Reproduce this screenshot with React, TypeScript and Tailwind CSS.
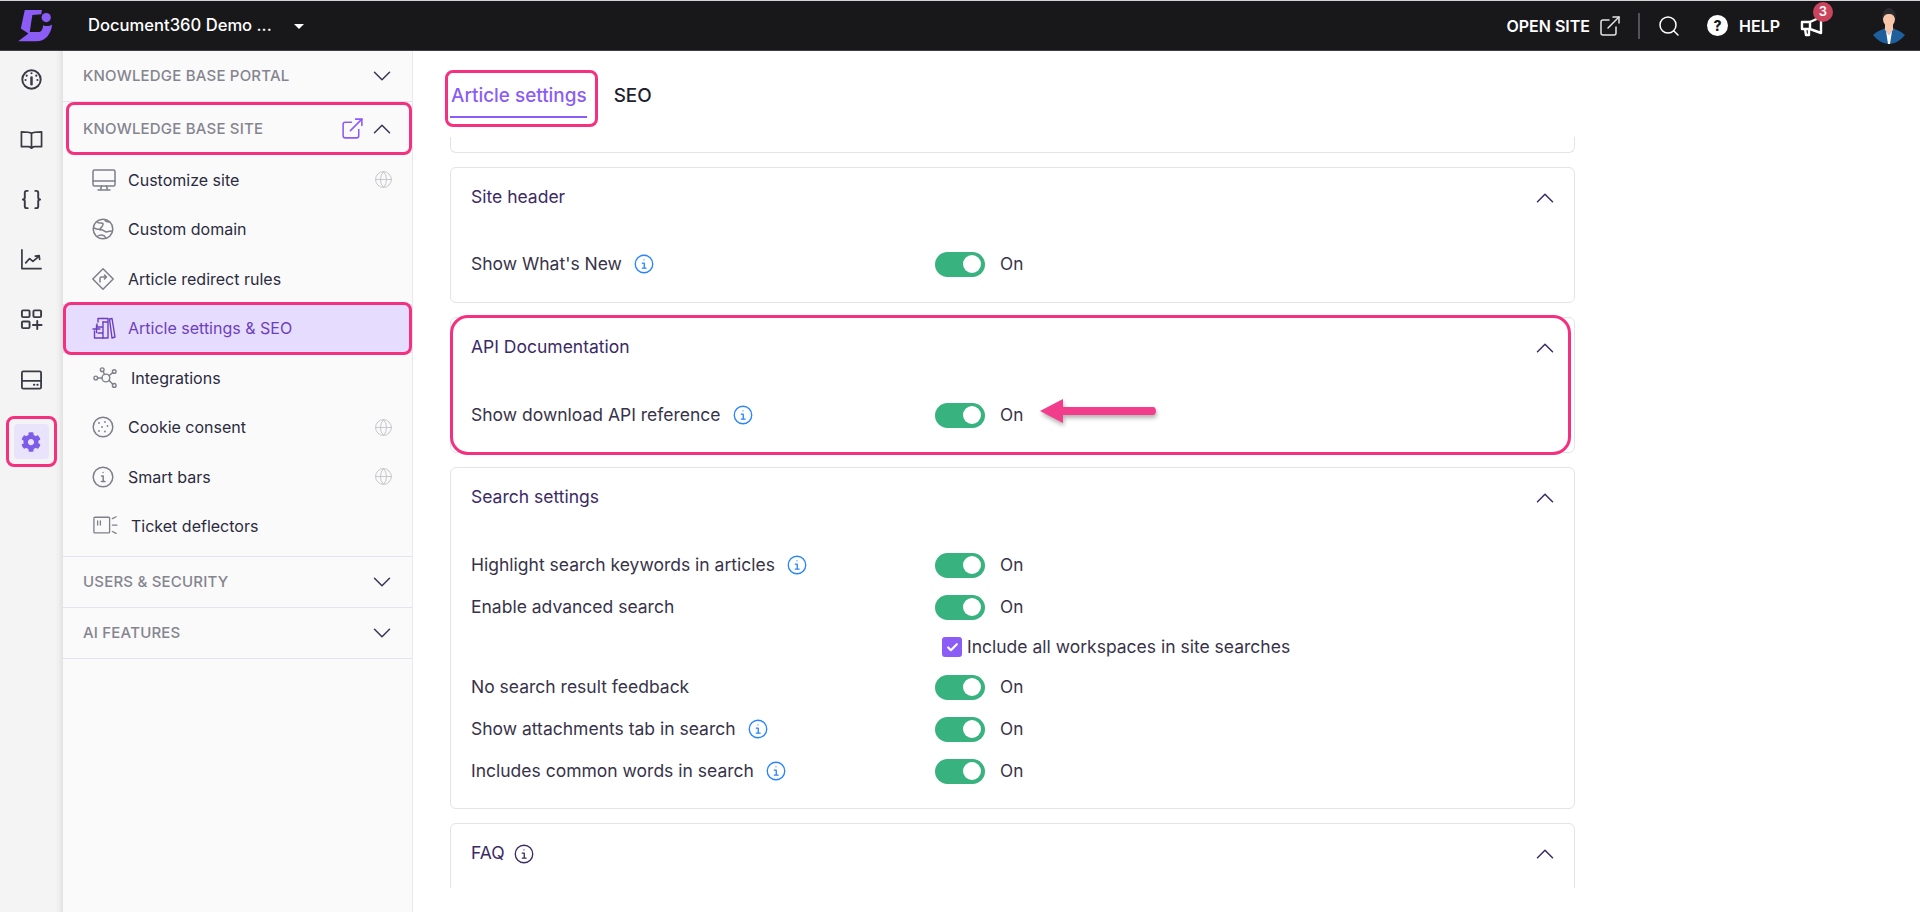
import type { ReactNode } from "react"
import { ChevronDown, ChevronUp, ExternalLink, Search, Braces, Globe, Check } from "lucide-react"
import { FaCog } from "react-icons/fa"

function Icon({ className, children, box = 24 }: { className?: string; children: ReactNode; box?: number }) {
  return (
    <svg viewBox={`0 0 ${box} ${box}`} fill="none" stroke="currentColor" strokeLinecap="round" strokeLinejoin="round" className={className}>
      {children}
    </svg>
  )
}

function Logo() {
  return (
    <svg viewBox="25 27 105 100" className="w-[35px] h-[33px]">
      <path fill="#8b5cf6" d="M45 30 L97 30 L95 43 L68 45 L60 97 L86 97 C94 97 99 90 101 76 C108 80 120 80 128 74 C125 100 110 125 80 125 L25 125 L56 101 L33 86 Z" />
      <circle cx="110" cy="53" r="14" fill="#8b5cf6" />
    </svg>
  )
}

function Avatar() {
  return (
    <svg viewBox="0 0 34 36" className="w-[34px] h-[36px]">
      <path fill="#1e5f9c" d="M1 27 C5 23 10 22 13 20 L21 20 C24 22 29 23 33 27 C29 32 23 36 17 36 C11 36 5 32 1 27 Z" />
      <path fill="#f7c6a8" d="M13 15 L21 15 L21 22 L17 27 L13 22 Z" />
      <path fill="#fff" d="M14 23 L17 27 L20 23 L18 36 L16 36 Z" />
      <ellipse cx="17" cy="11" rx="6" ry="7.5" fill="#f7c6a8" />
      <path fill="#2a2a2e" d="M10.5 12 C9.5 3 14 0 17 0 C21 0 24.5 4 23.5 12 C22.5 7 20 6 17 6 C14 6 11.5 7 10.5 12 Z" />
    </svg>
  )
}

function TopBar() {
  return (
    <header className="h-[51px] shrink-0 bg-[#18181b] border-t border-t-[#d4d4d8] border-b border-b-[#3f3f46] flex items-center text-white">
      <div className="ml-[18px] flex"><Logo /></div>
      <span className="ml-[35px] text-[16.6px] font-medium">Document360 Demo ...</span>
      <span className="ml-[22px] mt-[1px] w-0 h-0 border-x-[5px] border-x-transparent border-t-[5px] border-t-white" />
      <div className="ml-auto flex items-center h-full">
        <span className="text-[16px] font-semibold">OPEN SITE</span>
        <ExternalLink className="ml-[8px] w-[24px] h-[24px] text-[#e4e4e7]" strokeWidth={1.5} />
        <span className="ml-[16px] w-[2px] h-[26px] bg-[#52525b]" />
        <Search className="ml-[17px] w-[24px] h-[24px]" strokeWidth={1.5} />
        <span className="ml-[26px] w-[21px] h-[21px] rounded-full bg-white text-[#18181b] text-[14px] font-extrabold flex items-center justify-center">?</span>
        <span className="ml-[11px] text-[16px] font-semibold">HELP</span>
        <div className="relative ml-[19px] w-[24px] h-[24px]">
          <Icon className="w-[24px] h-[24px]">
            <path strokeWidth="2.4" d="M22 3 L22 19 L11 15 L3 15 L3 8 L11 8 Z M11 8 L11 15 M6 15 L7 21 L10 21 L10 15" />
          </Icon>
          <span className="absolute -top-[12px] left-[14px] w-[20px] h-[20px] rounded-full bg-[#c9445c] text-[13px] font-semibold flex items-center justify-center">3</span>
        </div>
        <div className="ml-[49px] mr-[14px] flex"><Avatar /></div>
      </div>
    </header>
  )
}

const railClass = "w-[23px] h-[23px] text-[#3a3a44]"

function Rail() {
  return (
    <aside className="w-[63px] shrink-0 bg-[#f4f4f5] shadow-[inset_-7px_0_6px_-5px_rgba(0,0,0,0.1)] flex flex-col items-center pr-[1px] pt-[17px]">
      <div className="flex flex-col items-center gap-[37px]">
        <Icon className={railClass}>
          <g strokeWidth="2">
            <circle cx="12" cy="12" r="9.6" />
            <path d="M12 10 L12 17" strokeWidth="2.6" />
            <path d="M12 5.5v.01M7 8v.01M17 8v.01M5.8 12.5v.01M18.2 12.5v.01" strokeWidth="2.2" />
          </g>
        </Icon>
        <Icon className={railClass}>
          <path strokeWidth="1.8" d="M12 5.5 C10 4 7 4 1.5 4 L1.5 19.5 L9 19.5 C10.5 19.5 11 20.5 12 21 C13 20.5 13.5 19.5 15 19.5 L22.5 19.5 L22.5 4 C17 4 14 4 12 5.5 Z M12 5.5 L12 20" />
        </Icon>
        <Braces className={railClass} strokeWidth={2} />
        <Icon className={railClass}>
          <path strokeWidth="1.8" d="M2 2 L2 21.5 L22 21.5 M6 15.5 L10 11 L13.5 14 L20 8.5 M16 8.5 L20 8 L20.5 12" />
        </Icon>
        <Icon className={railClass}>
          <g strokeWidth="2">
            <rect x="2" y="2.5" width="8" height="7" rx="1.2" />
            <rect x="14" y="2.5" width="8" height="7" rx="1.2" />
            <rect x="2" y="14" width="8" height="7" rx="1.2" />
            <path d="M18 13.5 L18 22 M13.5 17.8 L22.5 17.8" />
          </g>
        </Icon>
        <Icon className={railClass}>
          <path strokeWidth="1.9" d="M3.5 3.5 L20.5 3.5 C21.5 3.5 22 4 22 5 L22 20 C22 21 21.5 21.5 20.5 21.5 L3.5 21.5 C2.5 21.5 2 21 2 20 L2 5 C2 4 2.5 3.5 3.5 3.5 Z M2 13.5 L22 13.5 M14.5 17.5 L15 17.5 M18 17.5 L18.5 17.5" />
        </Icon>
      </div>
      <div className="relative mt-[33px] w-[35px] h-[35px] rounded-[4px] bg-[#e9e3fb] flex items-center justify-center">
        <FaCog className="w-[20px] h-[20px] text-[#7c5ce8]" />
        <span className="absolute -inset-[8px] rounded-[8px] border-[3px] border-[#f5317f]" />
      </div>
    </aside>
  )
}

const sectionLabel = "text-[15px] font-medium text-[#85858f] tracking-[0.2px]"

function SectionRow({ label }: { label: string }) {
  return (
    <div className="h-[51px] flex items-center pl-[20px] pr-[15px] border-b border-[#e2e4f0]">
      <span className={sectionLabel}>{label}</span>
      <ChevronDown className="ml-auto w-[30px] h-[30px] text-[#3b3355]" strokeWidth={1.2} />
    </div>
  )
}

const navIcon = "w-[24px] h-[24px] shrink-0 text-[#7f7f8a]"

function NavItem({ icon, label, globe, gap = "ml-[12px]", active }: { icon: ReactNode; label: string; globe?: boolean; gap?: string; active?: boolean }) {
  return (
    <div className={`relative h-[49.5px] flex items-center pl-[29px] pr-[19px] ${active ? "bg-[#e6dcfd] text-[#6d3fc0]" : "text-[#2b2b40]"}`}>
      {icon}
      <span className={`${gap} text-[16px]`}>{label}</span>
      {globe && <Globe className="ml-auto w-[19px] h-[19px] text-[#c4c4ca]" strokeWidth={1.2} />}
      {active && <span className="absolute -top-[2px] -bottom-[2px] inset-x-0 rounded-[8px] border-[3px] border-[#f5317f]" />}
    </div>
  )
}

function Sidebar() {
  return (
    <nav className="w-[350px] shrink-0 bg-[#fafafa] border-r border-[#e8e8ee]">
      <SectionRow label="KNOWLEDGE BASE PORTAL" />
      <div className="relative h-[53px] flex items-center pl-[20px] pr-[15px]">
        <span className={`${sectionLabel} pt-[1px]`}>KNOWLEDGE BASE SITE</span>
        <ExternalLink className="ml-auto w-[25px] h-[25px] text-[#8b5cf6]" strokeWidth={1.5} />
        <ChevronUp className="ml-[2px] w-[30px] h-[30px] text-[#3b3355]" strokeWidth={1.2} />
        <span className="absolute inset-y-0 left-[3px] right-0 rounded-[8px] border-[3px] border-[#f5317f]" />
      </div>
      <div className="pb-[5px]">
        <NavItem label="Customize site" globe icon={
          <Icon className={navIcon}>
            <g strokeWidth="1.5">
              <rect x="1" y="2" width="22" height="16" rx="1.5" />
              <path d="M1 13 L23 13 M9.5 18 L8.5 22 M14.5 18 L15.5 22 M6 22 L18 22" />
            </g>
          </Icon>
        } />
        <NavItem label="Custom domain" icon={
          <Icon className={navIcon}>
            <g strokeWidth="1.5" transform="translate(-1 0)">
              <circle cx="12" cy="12" r="9.8" />
              <path d="M6 5 C8 7 10 5.5 12 6.5 C13 9 10 10 9 12 C7 13 5 12 3 11 M14 2.5 C14 5 17 5 18.5 5 M9 13 C11 12 13 14 15 15 C17 14.5 19 14 21.5 14 M6 19.5 C9 17.5 13 17 15 21" />
            </g>
          </Icon>
        } />
        <NavItem label="Article redirect rules" icon={
          <Icon className={navIcon}>
            <g strokeWidth="1.5" transform="translate(-1 0)">
              <path d="M12 1.8 L22.2 12 L12 22.2 L1.8 12 Z" />
              <path d="M9 15 L9 11.5 C9 10.5 9.5 10 10.5 10 L15.5 10 M13.5 8 L15.5 10 L13.5 12" />
            </g>
          </Icon>
        } />
        <NavItem active label="Article settings & SEO" icon={
          <Icon className="w-[24px] h-[24px] shrink-0 text-[#6d3fc0]">
            <g strokeWidth="1.4">
              <path d="M6 6 L6 2.5 L11 2.5 M5 11 L5 8 M11 6 L11 22 L2.5 22 L2.5 15 M11 11 L6 11 M11 17 L6 17" />
              <path d="M11 2.5 L16 2.5 L16 22 L11 22 M16 6 L11 6" />
              <path d="M17.5 3 L20 2.5 L23 21 L20 22 Z" />
              <path d="M1 13 L8 13 M4.5 9.5 L4.5 16.5" />
            </g>
          </Icon>
        } />
        <NavItem label="Integrations" gap="ml-[13px]" icon={
          <Icon className="w-[26px] h-[24px] shrink-0 text-[#7f7f8a]" box={26}>
            <g strokeWidth="1.5">
              <circle cx="14" cy="13" r="4.2" />
              <circle cx="10" cy="4" r="2" />
              <circle cx="23" cy="6" r="2" />
              <circle cx="3" cy="13" r="2" />
              <circle cx="23" cy="21" r="2" />
              <path d="M5 13 L9.8 13 M11 6 L12.5 9.2 M21.4 7.2 L17.2 10.5 M21.5 19.7 L17.2 15.5" />
            </g>
          </Icon>
        } />
        <NavItem label="Cookie consent" globe icon={
          <Icon className={navIcon}>
            <g strokeWidth="1.5" transform="translate(-1 0)">
              <circle cx="12" cy="12" r="9.8" />
              <path d="M8 8v.01M14 7v.01M11 12v.01M16.5 11v.01M8 16v.01M14 16.5v.01" strokeWidth="1.8" />
            </g>
          </Icon>
        } />
        <NavItem label="Smart bars" globe icon={
          <Icon className={navIcon}>
            <g strokeWidth="1.5" transform="translate(-1 0)">
              <circle cx="12" cy="12" r="9.8" />
              <path d="M10.5 11 L12.2 11 L12.2 16.5 M10.5 16.5 L14 16.5 M12 7.5v.01" />
            </g>
          </Icon>
        } />
        <NavItem label="Ticket deflectors" gap="ml-[13px]" icon={
          <Icon className="w-[26px] h-[24px] shrink-0 text-[#7f7f8a]" box={26}>
            <g strokeWidth="1.4">
              <rect x="1" y="3.5" width="17" height="17" rx="1" />
              <path d="M5 7.5 L5 12 M8 7.5 L8 12" />
              <path d="M21 5 L25 3 M21 12 L26 12 M21 19 L25 21" />
            </g>
          </Icon>
        } />
      </div>
      <div className="border-t border-[#e2e4f0]">
        <SectionRow label="USERS & SECURITY" />
        <SectionRow label="AI FEATURES" />
      </div>
    </nav>
  )
}

function Info({ dark }: { dark?: boolean }) {
  return (
    <Icon className={`w-[20px] h-[20px] shrink-0 ${dark ? "text-[#3b2a66]" : "text-[#2684ff]"}`}>
      <g strokeWidth="1.6">
        <circle cx="12" cy="12" r="10.5" />
        <path d="M10 11 L12.3 11 L12.3 17 M10 17 L14.5 17 M12 7v.01" />
      </g>
    </Icon>
  )
}

function Toggle() {
  return (
    <div className="w-[50px] h-[25px] rounded-full bg-[#38b27f] flex items-center justify-end pr-[4px]">
      <span className="w-[18px] h-[18px] rounded-full bg-white" />
    </div>
  )
}

function Row({ label, info, h = "h-[42px]", children }: { label: string; info?: boolean; h?: string; children?: ReactNode }) {
  return (
    <div className={`${h} flex items-center`}>
      <div className="w-[464px] flex items-center gap-[12px] text-[17.5px] text-[#38334a]">
        <span>{label}</span>
        {info && <Info />}
      </div>
      <Toggle />
      <span className="ml-[15px] text-[17.2px] text-[#38334a]">On</span>
      {children}
    </div>
  )
}

function Card({ title, children, dark, className }: { title: string; children?: ReactNode; dark?: boolean; className?: string }) {
  return (
    <section className={`relative w-[1125px] border border-[#e3e3ec] rounded-[6px] bg-white ${className ?? ""}`}>
      <div className="h-[59px] flex items-center pl-[20px] pr-[14px] text-[17.5px] text-[#3b2a66]">
        <span>{title}</span>
        {dark && <span className="ml-[9px] flex"><Info dark /></span>}
        <ChevronUp className="ml-auto w-[30px] h-[30px] text-[#3b2a66]" strokeWidth={1.2} />
      </div>
      <div className="pl-[20px]">{children}</div>
    </section>
  )
}

function Content() {
  return (
    <main className="flex-1 bg-white flex flex-col min-w-0">
      <div className="h-[86px] shrink-0 flex pl-[37px]">
        <div className="relative pl-[1px] pt-[33px] h-[67px] border-b-[2px] border-[#8b5cf6] text-[18.9px] leading-[24px] font-medium text-[#8b5cf6]">
          Article settings
          <span className="absolute -left-[5px] -right-[11px] top-[19px] h-[57px] rounded-[8px] border-[3px] border-[#f5317f]" />
        </div>
        <div className="ml-[27px] pt-[33px] text-[18.9px] leading-[24px] font-medium text-[#1f1f2e]">SEO</div>
      </div>
      <div className="h-[751px] overflow-hidden pl-[37px] flex flex-col gap-[14px]">
        <div className="h-[16px] shrink-0 w-[1125px] border border-t-0 border-[#e3e3ec] rounded-b-[6px]" />
        <Card title="Site header" className="h-[136px] shrink-0">
          <div className="pt-[20px]"><Row h="h-[34px]" label="Show What's New" info /></div>
        </Card>
        <Card title="API Documentation" className="h-[136px] shrink-0">
          <div className="pt-[21px]">
            <Row h="h-[34px]" label="Show download API reference" info>
              <svg viewBox="0 0 120 30" className="ml-[15px] mb-[4px] w-[120px] h-[30px] drop-shadow-[1px_3px_2px_rgba(0,0,0,0.3)]">
                <path d="M2 13 L25 1 L25 9 L115 9 C119 9 119 17 115 17 L25 17 L25 25 Z" fill="#f23c8c" />
              </svg>
            </Row>
          </div>
          <span className="absolute -top-[3px] -bottom-[3px] -left-[1px] right-[3px] rounded-[18px] border-[3px] border-[#f5317f]" />
        </Card>
        <Card title="Search settings" className="h-[342px] shrink-0">
          <div className="pt-[17px]">
            <Row label="Highlight search keywords in articles" info />
            <Row label="Enable advanced search" />
            <div className="h-[38px] flex items-center pl-[471px]">
              <span className="w-[20px] h-[20px] rounded-[3px] bg-[#8b5cf6] flex items-center justify-center">
                <Check className="w-[13px] h-[13px] text-white" strokeWidth={4} />
              </span>
              <span className="ml-[5px] text-[17.5px] text-[#38334a]">Include all workspaces in site searches</span>
            </div>
            <Row label="No search result feedback" />
            <Row label="Show attachments tab in search" info />
            <Row label="Includes common words in search" info />
          </div>
        </Card>
        <Card title="FAQ" dark className="h-[100px] shrink-0" />
      </div>
    </main>
  )
}

export default function App() {
  return (
    <div className="w-[1920px] h-[912px] overflow-hidden bg-white font-['Inter',sans-serif] flex flex-col">
      <TopBar />
      <div className="flex flex-1 min-h-0">
        <Rail />
        <Sidebar />
        <Content />
      </div>
    </div>
  )
}
